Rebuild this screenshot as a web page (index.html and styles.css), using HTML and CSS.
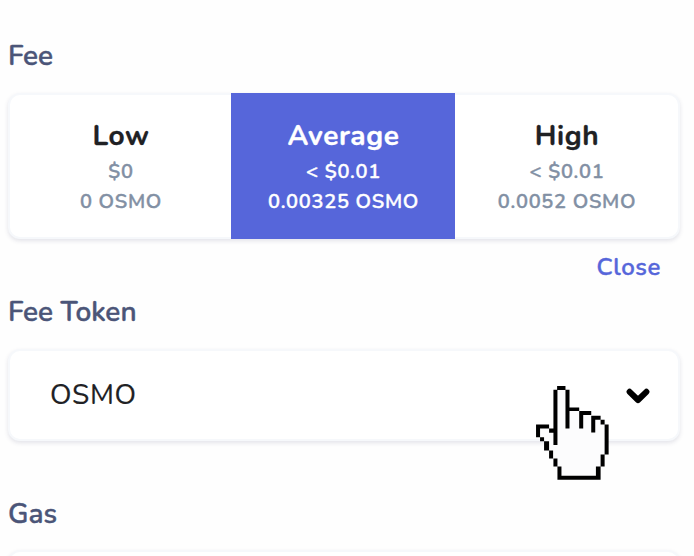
FILE: index.html
```html
<!DOCTYPE html>
<html lang="en">
<head>
  <meta charset="UTF-8">
  <meta name="viewport" content="width=device-width, initial-scale=1.0">
  <link rel="stylesheet" href="styles.css">
  <title>Fee</title>
</head>
<body>
  <div class="form">
    <div class="label">Fee</div>
    <div class="fee-options">
      <div class="fee-option">
        <div class="fee-name">Low</div>
        <div class="fee-value">$0</div>
        <div class="fee-value">0 OSMO</div>
      </div>
      <div class="fee-option selected">
        <div class="fee-name">Average</div>
        <div class="fee-value">&lt; $0.01</div>
        <div class="fee-value">0.00325 OSMO</div>
      </div>
      <div class="fee-option">
        <div class="fee-name">High</div>
        <div class="fee-value">&lt; $0.01</div>
        <div class="fee-value">0.0052 OSMO</div>
      </div>
    </div>
    <div class="close-row"><a class="close">Close</a></div>

    <div class="label token-label">Fee Token</div>
    <div class="select">
      <span class="select-value">OSMO</span>
      <svg class="chevron" width="24" height="16" viewBox="0 0 24 16">
        <path d="M3.6 3.8 L12 12 L20.4 3.8" fill="none" stroke="#000" stroke-width="6" stroke-linecap="round" stroke-linejoin="round"/>
      </svg>
      <!-- hand pointer -->
      <svg class="pointer" viewBox="33 33 218 281">
        <path fill="#fcfcfd" d="M96 40H125V100H165V112H200V125H228V140H242V240H230V276H216V305H100V272H88V248H76V224H62V196H48V184H38V152H70V165H90V40Z"/>
        <path d="M96 33h25v12h-25z M85 44h12v165h-12z M121 44h12v116h-12z M133 97h29v11h-29z M162 108h36v12h-24v40h-12z M198 122h28v12h-16v38h-12z M226 134h12v14h-12z M238 148h12v90h-12z M226 238h12v36h-12z M212 274h14v39h-129v-39h12v27h103z M85 250h12v24h-12z M72 226h12v24h-12z M57 198h15v28h-15z M45 186h12v12h-12z M33 148h39v12h-27v26h-12z M72 160h13v13h-13z"/>
      </svg>
    </div>

    <div class="label gas-label">Gas</div>
    <div class="input"></div>
  </div>
</body>
</html>
```
FILE: styles.css
```css
body {
  margin: 0;
  background-color: #fefefe;
  font-family: Nunito, Lato, sans-serif;
}

.form {
  box-sizing: border-box;
  height: 556px;
  padding: 38px 14px 0 8px;
  overflow: hidden;
}

.label {
  height: 36px;
  line-height: 36px;
  font-size: 28px;
  font-weight: 600;
  color: #4b5578;
  -webkit-text-stroke: 0.4px #4b5578;
}

.fee-options,
.select,
.input {
  box-sizing: border-box;
  border: 2px solid #f6f8fb;
  border-radius: 12px;
  background-color: #fff;
  box-shadow: 0 2px 4px rgba(50, 50, 93, 0.13);
}

.fee-options {
  display: grid;
  grid-template-columns: 221px 224px 1fr;
  height: 146px;
  margin-top: 19px;
}

.fee-option {
  padding-top: 24px;
  padding-left: 1px;
  text-align: center;
}

.fee-option.selected {
  margin: -2px 0;
  padding-top: 26px;
  background-color: #5666da;
}

.fee-name {
  height: 34px;
  line-height: 34px;
  margin-bottom: 4px;
  font-size: 28px;
  font-weight: 700;
  letter-spacing: 0.6px;
  color: #202124;
  -webkit-text-stroke: 0.3px;
}

.fee-value {
  height: 30px;
  line-height: 30px;
  font-size: 20px;
  font-weight: 600;
  letter-spacing: 0.7px;
  color: #8290a4;
  -webkit-text-stroke: 0.4px;
}

.selected .fee-name,
.selected .fee-value {
  color: #fff;
}

.close-row {
  height: 30px;
  margin-top: 13px;
  padding-right: 19px;
  text-align: right;
  line-height: 30px;
}

.close {
  font-size: 24px;
  font-weight: 600;
  letter-spacing: 0.6px;
  color: #5666da;
  -webkit-text-stroke: 0.4px;
}

.token-label {
  margin-top: 12px;
}

.select {
  position: relative;
  display: flex;
  align-items: center;
  justify-content: space-between;
  height: 92px;
  margin-top: 19px;
  padding: 0 28px 0 40px;
}

.select-value {
  font-size: 28px;
  letter-spacing: 0.6px;
  color: #202124;
  -webkit-text-stroke: 0.2px;
}

.chevron {
  margin-top: 2px;
}

.pointer {
  position: absolute;
  left: 526px;
  top: 35px;
  width: 73px;
  height: 94px;
}

.gas-label {
  margin-top: 55px;
}

.input {
  height: 92px;
  margin-top: 18px;
}
```
